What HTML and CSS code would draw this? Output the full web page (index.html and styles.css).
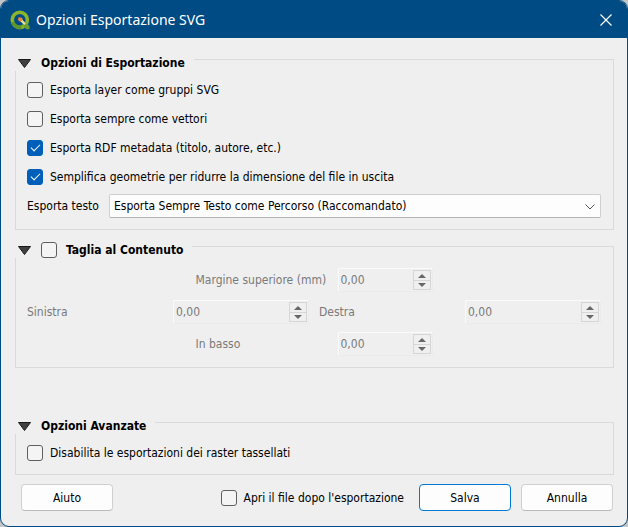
FILE: index.html
```
<!DOCTYPE html>
<html lang="it">

<head>
  <meta charset="UTF-8">
  <meta name="viewport" content="width=device-width, initial-scale=1.0">
  <title>Opzioni Esportazione SVG</title>
  <link rel="stylesheet" href="styles.css">
</head>

<body>
  <form class="dialog">
    <header class="titlebar">
      <svg class="logo" viewBox="0 0 20 20" width="20" height="20" aria-hidden="true">
        <circle cx="9.8" cy="9.8" r="7.6" fill="none" stroke="#8ab52c" stroke-width="3.6" />
        <path d="M2.6 12a7.6 7.6 0 0 0 9 5.2" fill="none" stroke="#5c9634" stroke-width="3.6" />
        <path d="M12.2 14.4l2.6-2.6 4.7 4.2v3.3h-3.3z" fill="#69a033" />
        <path d="M8.2 7.6h3.2l1.6 1.6-2.8 2.8-2-1.8z" fill="#f08a35" />
        <path d="M10.6 11.6l1.8-1.8 3.4 3.6-1.6 1.6z" fill="#e6dfa0" />
      </svg>
      <h1>Opzioni Esportazione SVG</h1>
      <button type="button" class="close" aria-label="Chiudi">
        <svg viewBox="0 0 12 12" width="12" height="12"><path d="M.5 .5l11 11M11.5 .5l-11 11" stroke="#fff" stroke-width="1.2" /></svg>
      </button>
    </header>

    <main class="content">
      <fieldset class="group">
        <legend>
          <button type="button" class="toggle" aria-label="Comprimi"><svg viewBox="0 0 13 9" width="13" height="9"><path d="M.5 .5h12l-6 8z" fill="#404040" stroke="#1a1a1a" /></svg></button>
          Opzioni di Esportazione
        </legend>
        <div class="options">
          <label class="check"><input type="checkbox">Esporta layer come gruppi SVG</label>
          <label class="check"><input type="checkbox">Esporta sempre come vettori</label>
          <label class="check"><input type="checkbox" checked>Esporta RDF metadata (titolo, autore, etc.)</label>
          <label class="check"><input type="checkbox" checked>Semplifica geometrie per ridurre la dimensione del file in uscita</label>
        </div>
        <div class="text-row">
          <label for="text-export">Esporta testo</label>
          <div class="combo">
            <select id="text-export">
              <option>Esporta Sempre Testo come Percorso (Raccomandato)</option>
              <option>Esporta Sempre Testo come Oggetto Testo</option>
            </select>
            <svg class="chevron" viewBox="0 0 10 6" width="10" height="6" aria-hidden="true"><path d="M.5 .5l4.5 4.5 4.5-4.5" fill="none" stroke="#555" /></svg>
          </div>
        </div>
      </fieldset>

      <fieldset class="group crop">
        <legend>
          <button type="button" class="toggle" aria-label="Comprimi"><svg viewBox="0 0 13 9" width="13" height="9"><path d="M.5 .5h12l-6 8z" fill="#404040" stroke="#1a1a1a" /></svg></button>
          <label class="check"><input type="checkbox">Taglia al Contenuto</label>
        </legend>
        <div class="margin-pair">
          <label for="top">Margine superiore (mm)</label>
          <div class="spin">
            <input type="text" id="top" value="0,00" disabled>
            <div class="arrows">
              <button type="button" class="up" aria-label="Aumenta" disabled></button>
              <button type="button" class="down" aria-label="Diminuisci" disabled></button>
            </div>
          </div>
        </div>
        <div class="margin-sides">
          <label for="left">Sinistra</label>
          <div class="spin">
            <input type="text" id="left" value="0,00" disabled>
            <div class="arrows">
              <button type="button" class="up" aria-label="Aumenta" disabled></button>
              <button type="button" class="down" aria-label="Diminuisci" disabled></button>
            </div>
          </div>
          <label for="right">Destra</label>
          <div class="spin">
            <input type="text" id="right" value="0,00" disabled>
            <div class="arrows">
              <button type="button" class="up" aria-label="Aumenta" disabled></button>
              <button type="button" class="down" aria-label="Diminuisci" disabled></button>
            </div>
          </div>
        </div>
        <div class="margin-pair">
          <label for="bottom">In basso</label>
          <div class="spin">
            <input type="text" id="bottom" value="0,00" disabled>
            <div class="arrows">
              <button type="button" class="up" aria-label="Aumenta" disabled></button>
              <button type="button" class="down" aria-label="Diminuisci" disabled></button>
            </div>
          </div>
        </div>
      </fieldset>

      <fieldset class="group advanced">
        <legend>
          <button type="button" class="toggle" aria-label="Comprimi"><svg viewBox="0 0 13 9" width="13" height="9"><path d="M.5 .5h12l-6 8z" fill="#404040" stroke="#1a1a1a" /></svg></button>
          Opzioni Avanzate
        </legend>
        <label class="check"><input type="checkbox">Disabilita le esportazioni dei raster tassellati</label>
      </fieldset>
    </main>

    <footer class="buttons">
      <button type="button" class="btn">Aiuto</button>
      <label class="check open-after"><input type="checkbox">Apri il file dopo l'esportazione</label>
      <button type="submit" class="btn primary">Salva</button>
      <button type="button" class="btn">Annulla</button>
    </footer>
  </form>
</body>

</html>
```

FILE: styles.css
```
* {
  box-sizing: border-box;
}

body {
  margin: 0;
  background-color: #c4c4c4;
  font-family: "DejaVu Sans Condensed", Tahoma, sans-serif;
  font-size: 12px;
  line-height: 16px;
  color: #000;
}

button, input, select {
  font: inherit;
  color: inherit;
}

.dialog {
  display: flex;
  flex-direction: column;
  min-height: 100vh;
  background-color: #efefef;
  border: 1px solid #004b84;
  border-radius: 9px;
  overflow: hidden;
}

/* Title bar */
.titlebar {
  display: flex;
  align-items: center;
  gap: 6px;
  height: 37px;
  padding: 0 15px 0 9px;
  background-color: #004b84;
  color: #fff;
}

.titlebar h1 {
  flex: 1;
  margin: 0;
  font-family: "Noto Sans", "Segoe UI", sans-serif;
  font-size: 14px;
  font-weight: normal;
}

.close, .toggle {
  display: flex;
  padding: 0;
  border: none;
  background: none;
}

/* Group boxes */
.content {
  flex: 1;
  display: flex;
  flex-direction: column;
  padding: 9px 13px 0 14px;
}

.group {
  min-width: 0;
  margin: 0;
  padding: 11px 12px 11px 11px;
  border: 1px solid #dadada;
}

.group legend {
  display: flex;
  align-items: center;
  gap: 10px;
  height: 24px;
  margin-left: -12px;
  padding: 8px 9px 0 3px;
  background-color: #efefef;
  font-weight: bold;
}

.group legend .check {
  gap: 9px;
}

.crop {
  margin-top: 4px;
  padding-top: 10px;
}

.advanced {
  margin-top: auto;
  padding-bottom: 13px;
}

.check {
  display: flex;
  align-items: center;
  gap: 7px;
}

.check input {
  appearance: none;
  display: grid;
  place-items: center;
  flex: none;
  width: 16px;
  height: 16px;
  margin: 0;
  border: 1px solid #5f5f5f;
  border-radius: 3px;
  background-color: #f4f4f4;
}

.check input:checked {
  border-color: #005fb8;
  background-color: #005fb8;
}

.check input:checked::after {
  content: "";
  width: 8px;
  height: 4px;
  margin-bottom: 3px;
  border-left: 1px solid #fff;
  border-bottom: 1px solid #fff;
  transform: rotate(-45deg);
}

.options {
  display: grid;
  gap: 13px;
}

.text-row {
  display: flex;
  align-items: center;
  gap: 10px;
  margin-top: 9px;
}

.combo {
  position: relative;
  flex: 1;
}

.combo select {
  appearance: none;
  width: 100%;
  height: 24px;
  padding: 0 24px 0 4px;
  border: 1px solid #cfcfcf;
  border-bottom-color: #b4b4b4;
  border-radius: 2px;
  background-color: #fdfdfd;
}

.chevron {
  position: absolute;
  right: 6px;
  top: 10px;
  pointer-events: none;
}

/* Margins */
.margin-pair, .margin-sides {
  display: grid;
  align-items: center;
  gap: 10px;
  color: #7a7a7a;
}

.margin-pair {
  grid-template-columns: 132px 95px;
  justify-content: center;
  white-space: nowrap;
}

.margin-sides {
  grid-template-columns: repeat(4, minmax(0, 1fr));
  margin: 8px 0;
}

.spin {
  display: flex;
  height: 24px;
  padding: 1px;
  border: 1px solid #ebebeb;
  border-top-color: #fafafa;
  border-left-color: #fafafa;
}

.spin input {
  flex: 1;
  min-width: 0;
  padding: 0 1px;
  border: none;
  background: none;
}

.arrows {
  display: grid;
  grid-template-rows: 1fr 1fr;
  width: 18px;
  border: 1px solid #d6d6d6;
}

.arrows button {
  display: grid;
  place-items: center;
  padding: 0;
  border: none;
  background: none;
}

.arrows .down {
  border-top: 1px solid #d6d6d6;
}

.arrows button::after {
  content: "";
  border: 4px solid transparent;
}

.arrows .up::after {
  border-top: none;
  border-bottom-color: #666;
}

.arrows .down::after {
  border-bottom: none;
  border-top-color: #666;
}

/* Bottom buttons */
.buttons {
  display: flex;
  align-items: center;
  gap: 10px;
  padding: 9px 14px 15px 20px;
}

.open-after {
  margin-left: auto;
  margin-right: 5px;
}

.btn {
  width: 92px;
  height: 27px;
  padding: 0;
  border: 1px solid #d0d0d0;
  border-bottom-color: #bbb;
  border-radius: 4px;
  background-color: #fdfdfd;
}

.primary {
  border-color: #0078d4;
}
```
